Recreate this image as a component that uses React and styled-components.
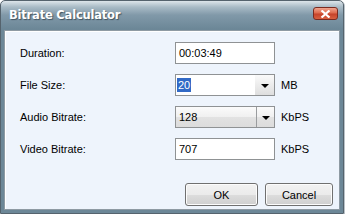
import React from "react";
import styled, { createGlobalStyle } from "styled-components";

const GlobalStyle = createGlobalStyle`
  html, body {
    margin: 0;
    padding: 0;
    background: #ffffff;
  }
  body {
    font-family: "Liberation Sans", Arial, sans-serif;
    font-size: 11px;
    color: #000;
  }
`;

const Window = styled.div`
  width: 344px;
  height: 214px;
  box-sizing: border-box;
  border: 1px solid #55636d;
  border-radius: 5px 5px 0 0;
  background: linear-gradient(180deg, #dde5ea 0px, #a9bbc6 6px, #8199a9 14px, #6c8797 28px, #6c8797 100%);
  padding: 0 3px 3px 3px;
  display: flex;
  flex-direction: column;
  box-shadow: 1px 1px 0 #b9c2c8;
`;

const TitleBar = styled.div`
  height: 29px;
  display: flex;
  align-items: center;
  justify-content: space-between;
  padding: 0 2px 0 5px;
  flex-shrink: 0;
`;

const Title = styled.div`
  color: #ffffff;
  font-family: "DejaVu Sans", Verdana, sans-serif;
  font-weight: bold;
  font-size: 11.5px;
  letter-spacing: -0.2px;
  text-shadow: 1px 1px 1px #3f5360;
  margin-top: -1px;
`;

const CloseButton = styled.div`
  width: 25px;
  height: 13px;
  margin-top: -4px;
  box-sizing: border-box;
  border: 1px solid #7a2b20;
  border-radius: 3px;
  background: linear-gradient(180deg, #f0a58f 0%, #de6a4c 45%, #c6432a 55%, #d8603f 100%);
  display: flex;
  align-items: center;
  justify-content: center;
`;

const Body = styled.div`
  flex: 1;
  background: #eef4fc;
  border: 1px solid #8e9aa3;
  box-shadow: inset 1px 1px 0 #ffffff;
  display: flex;
  flex-direction: column;
  padding: 11px 0 0 14px;
`;

const Form = styled.div`
  display: grid;
  grid-template-columns: 156px 100px auto;
  grid-auto-rows: 22px;
  row-gap: 10px;
  align-items: center;
`;

const Label = styled.div`
  padding-left: 1px;
`;

const Unit = styled.div`
  padding-left: 6px;
`;

const TextBox = styled.div`
  height: 22px;
  box-sizing: border-box;
  border: 1px solid #8f9294;
  background: #ffffff;
  display: flex;
  align-items: center;
  padding-left: 3px;
`;

const Combo = styled.div`
  height: 22px;
  box-sizing: border-box;
  border: 1px solid #8f9294;
  background: ${(p) => (p.list ? "linear-gradient(180deg, #fbfbfb 0%, #f0f0f0 50%, #e2e2e2 51%, #dcdcdc 100%)" : "#ffffff")};
  display: flex;
  align-items: stretch;
`;

const ComboText = styled.div`
  flex: 1;
  display: flex;
  align-items: center;
  padding-left: ${(p) => (p.list ? "3px" : "1px")};
`;

const Selected = styled.span`
  background: #3169c6;
  color: #ffffff;
  padding: 1px 1px 1px 1px;
`;

const ArrowBox = styled.div`
  width: ${(p) => (p.list ? "17px" : "19px")};
  display: flex;
  align-items: center;
  justify-content: center;
  border-left: ${(p) => (p.list ? "1px solid #9a9c9e" : "none")};
  background: ${(p) => (p.list ? "transparent" : "linear-gradient(180deg, #fafafa 0%, #ececec 50%, #dedede 100%)")};
`;

const Arrow = styled.div`
  width: 0;
  height: 0;
  border-left: 4px solid transparent;
  border-right: 4px solid transparent;
  border-top: 4px solid #000;
  margin-top: 1px;
`;

const Buttons = styled.div`
  display: flex;
  gap: 7px;
  margin-top: 23px;
  padding-left: 166px;
`;

const Button = styled.div`
  width: ${(p) => p.w}px;
  height: 23px;
  box-sizing: border-box;
  border: 1px solid #707070;
  border-radius: 3px;
  background: linear-gradient(180deg, #f2f2f2 0%, #ebebeb 50%, #dddddd 51%, #cfcfcf 100%);
  box-shadow: inset 0 0 0 1px #fcfcfc;
  display: flex;
  align-items: center;
  justify-content: center;
`;

const DropArrow = ({ list }) => (
  <ArrowBox list={list}>
    <Arrow />
  </ArrowBox>
);

export default function App() {
  return (
    <>
      <GlobalStyle />
      <Window>
        <TitleBar>
          <Title>Bitrate Calculator</Title>
          <CloseButton>
            <svg width="11" height="8" viewBox="0 0 11 8">
              <path d="M1.5 0.5 L9.5 7.5 M9.5 0.5 L1.5 7.5" stroke="#ffffff" strokeWidth="2.2" />
            </svg>
          </CloseButton>
        </TitleBar>
        <Body>
          <Form>
            <Label>Duration:</Label>
            <TextBox>00:03:49</TextBox>
            <span />

            <Label>File Size:</Label>
            <Combo>
              <ComboText>
                <Selected>20</Selected>
              </ComboText>
              <DropArrow />
            </Combo>
            <Unit>MB</Unit>

            <Label>Audio Bitrate:</Label>
            <Combo list>
              <ComboText list>128</ComboText>
              <DropArrow list />
            </Combo>
            <Unit>KbPS</Unit>

            <Label>Video Bitrate:</Label>
            <TextBox>707</TextBox>
            <Unit>KbPS</Unit>
          </Form>
          <Buttons>
            <Button w={73}>OK</Button>
            <Button w={68}>Cancel</Button>
          </Buttons>
        </Body>
      </Window>
    </>
  );
}
